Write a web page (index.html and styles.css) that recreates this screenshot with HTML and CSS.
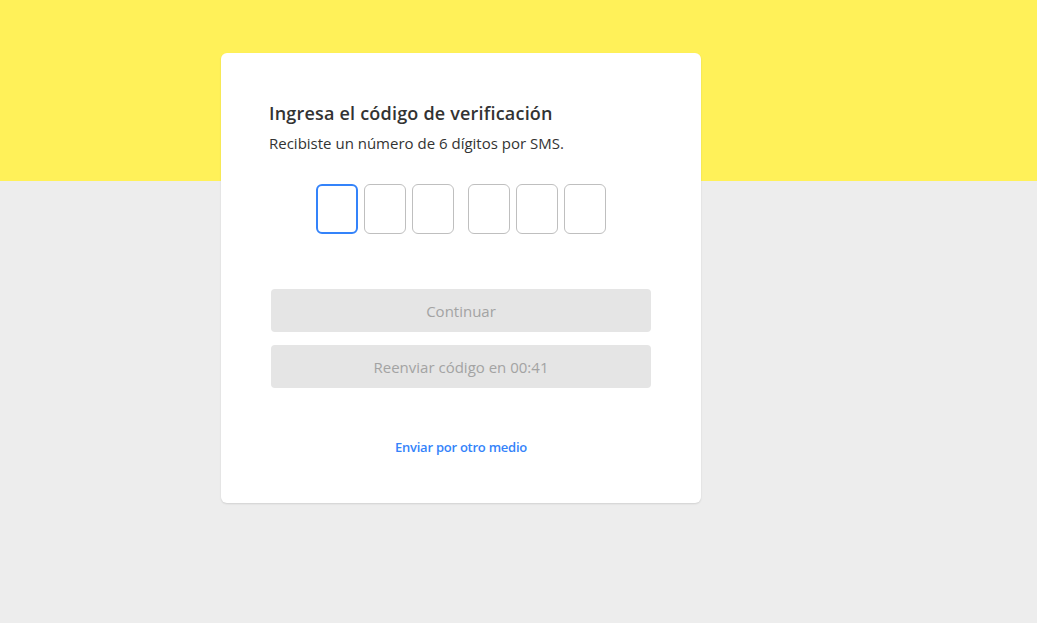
FILE: index.html
```html
<!DOCTYPE html>
<html lang="es">
<head>
<meta charset="utf-8">
<title>Verificación</title>
<link rel="stylesheet" href="styles.css">
</head>
<body>
<div class="band"></div>
<main class="page">
  <section class="card">
    <h1 class="title">Ingresa el código de verificación</h1>
    <p class="subtitle">Recibiste un número de 6 dígitos por SMS.</p>
    <div class="code">
      <div class="group">
        <input class="digit focused" type="text" maxlength="1">
        <input class="digit" type="text" maxlength="1">
        <input class="digit" type="text" maxlength="1">
      </div>
      <div class="group">
        <input class="digit" type="text" maxlength="1">
        <input class="digit" type="text" maxlength="1">
        <input class="digit" type="text" maxlength="1">
      </div>
    </div>
    <div class="actions">
      <button class="btn" disabled>Continuar</button>
      <button class="btn" disabled>Reenviar código en 00:41</button>
    </div>
    <a class="alt" href="#">Enviar por otro medio</a>
  </section>
</main>
</body>
</html>
```

FILE: styles.css
```css
html, body {
  margin: 0;
  padding: 0;
}
body {
  background: #ededed;
  font-family: "Open Sans", "Liberation Sans", sans-serif;
  min-height: 623px;
  position: relative;
}
.band {
  height: 181px;
  background: #fff159;
}
.page {
  position: absolute;
  top: 53px;
  left: 221px;
}
.card {
  box-sizing: border-box;
  width: 480px;
  height: 450px;
  background: #fff;
  border-radius: 6px;
  box-shadow: 0 1px 2px rgba(0,0,0,0.12);
  padding: 48px 50px 0 48px;
  display: flex;
  flex-direction: column;
}
.title {
  margin: 0;
  font-size: 18px;
  font-weight: 600;
  letter-spacing: 0.2px;
  color: #333;
  line-height: 24px;
}
.subtitle {
  margin: 8px 0 0;
  font-size: 15px;
  color: #333;
  line-height: 20px;
}
.code {
  display: flex;
  justify-content: center;
  gap: 14px;
  margin-top: 31px;
  padding-left: 2px;
}
.group {
  display: flex;
  gap: 6px;
}
.digit {
  box-sizing: border-box;
  width: 42px;
  height: 50px;
  border: 1px solid #bfbfbf;
  border-radius: 6px;
  background: #fff;
  padding: 0;
  outline: none;
  font-size: 20px;
  text-align: center;
}
.digit.focused {
  border: 2px solid #3483fa;
}
.actions {
  margin-top: 55px;
  margin-left: 2px;
  display: flex;
  flex-direction: column;
  gap: 13px;
}
.btn {
  height: 43px;
  border: none;
  border-radius: 4px;
  background: #e5e5e5;
  color: #a3a3a3;
  font-family: inherit;
  font-size: 15px;
  font-weight: 400;
}
.alt {
  align-self: center;
  margin-top: 50px;
  margin-left: 2px;
  font-size: 13px;
  font-weight: 600;
  letter-spacing: -0.25px;
  color: #3483fa;
  text-decoration: none;
}
```
